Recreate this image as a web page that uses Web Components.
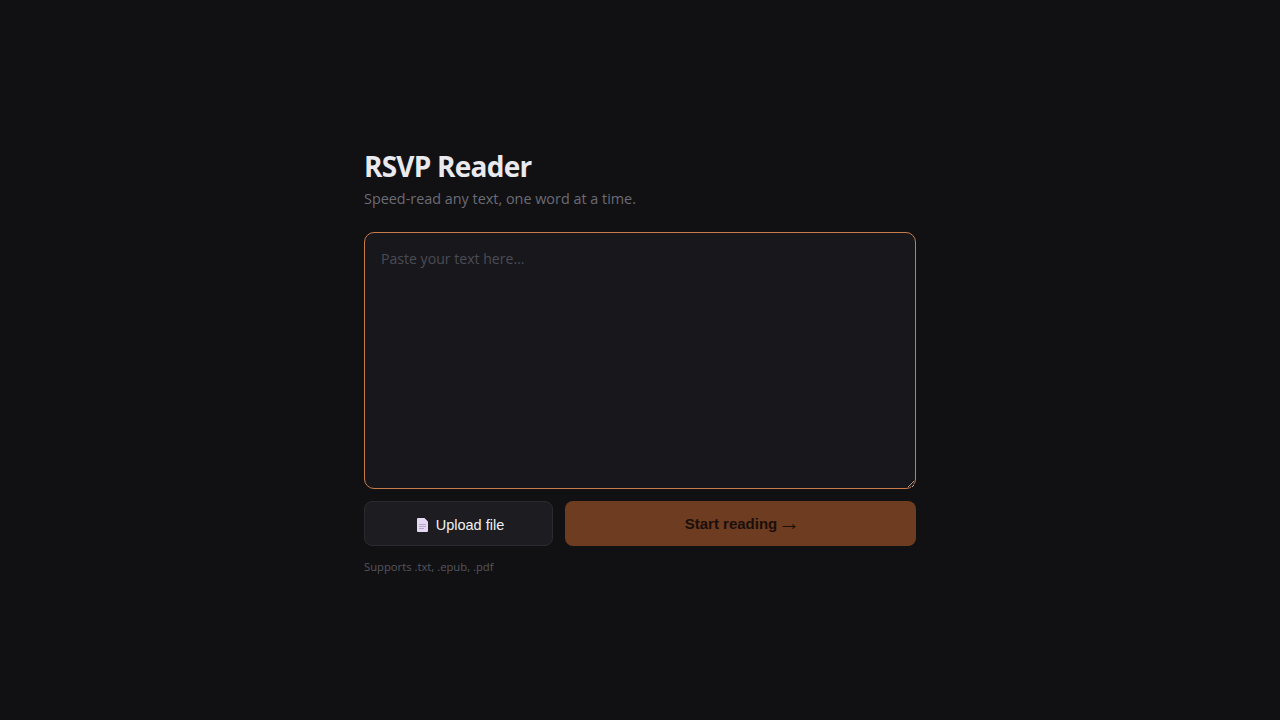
<!doctype html>
<html lang="en">
<head>
<meta charset="utf-8">
<title>RSVP Reader</title>
<style>
  html, body { height: 100%; }
  body { margin: 0; background: #111113; display: flex; align-items: center; justify-content: center; }
</style>
</head>
<body>
<rsvp-home></rsvp-home>
<script>
  // small button used for both actions in the bottom row
  class RsvpButton extends HTMLElement {
    connectedCallback() {
      if (this.shadowRoot) return;
      this.attachShadow({ mode: 'open' });
      this.shadowRoot.innerHTML = `<style>
        :host { display: block; }
        button { width: 100%; height: 45px; box-sizing: border-box; border-radius: 8px; cursor: pointer;
          display: flex; align-items: center; justify-content: center; gap: 8px; padding: 0;
          font: 400 14.5px "Liberation Sans", Arial, sans-serif; }
        :host([variant="ghost"]) button { background: #1c1c21; border: 1px solid #2a2a30; color: #f1f1f4; padding: 2px 0 0 4px; }
        :host([variant="primary"]) button { background: #6e3c20; border: 0; color: #1a0f0a; font-size: 15px; font-weight: 700; gap: 1px; }
        ::slotted(.arrow) { font-weight: 400; font-size: 22px; line-height: 1; margin: -2px -4px 0 0; }
      </style><button type="button"><slot></slot></button>`;
    }
  }
  customElements.define('rsvp-button', RsvpButton);

  class RsvpHome extends HTMLElement {
    connectedCallback() {
      if (this.shadowRoot) return;
      this.attachShadow({ mode: 'open' });
      this.shadowRoot.innerHTML = `<style>
        :host { display: block; width: 552px; padding-top: 5px; font-family: "Open Sans", "Noto Sans", sans-serif; }
        h1 { margin: 0; font-size: 28px; line-height: 32px; font-weight: 700; letter-spacing: -0.77px; color: #e9e9ee; }
        p { margin: 0; }
        .sub { margin-top: 7px; font-size: 14.4px; line-height: 20px; color: #6b6b76; }
        textarea { display: block; width: 100%; height: 257px; box-sizing: border-box; margin-top: 23px; padding: 16px;
          background: #18181c; border: 1px solid #c97c4b; border-radius: 10px; outline: 0; resize: vertical;
          color: #e9e9ee; font: 14.1px/20px "Open Sans", "Noto Sans", sans-serif; }
        textarea::placeholder { color: #4b4b55; opacity: 1; }
        .row { display: grid; grid-template-columns: 189px 1fr; gap: 12px; margin-top: 12px; }
        svg { display: block; width: 11px; height: 14px; }
        .hint { margin-top: 13px; font-size: 11.25px; line-height: 16px; color: #55555f; }
      </style>
      <h1>RSVP Reader</h1>
      <p class="sub">Speed-read any text, one word at a time.</p>
      <textarea placeholder="Paste your text here..."></textarea>
      <div class="row">
        <rsvp-button variant="ghost">
          <svg viewBox="0 0 11 14"><path fill="#e4d8f2" d="M1 0h6.5L11 3.5V13a1 1 0 0 1-1 1H1a1 1 0 0 1-1-1V1a1 1 0 0 1 1-1z"/><path fill="#b5a8c9" d="M2 6h7v1H2zM2 8h7v1H2zM2 10h5v1H2z"/></svg>
          <span>Upload file</span>
        </rsvp-button>
        <rsvp-button variant="primary"><span>Start reading</span><span class="arrow">→</span></rsvp-button>
      </div>
      <p class="hint">Supports .txt, .epub, .pdf</p>`;
    }
  }
  customElements.define('rsvp-home', RsvpHome);
</script>
</body>
</html>
